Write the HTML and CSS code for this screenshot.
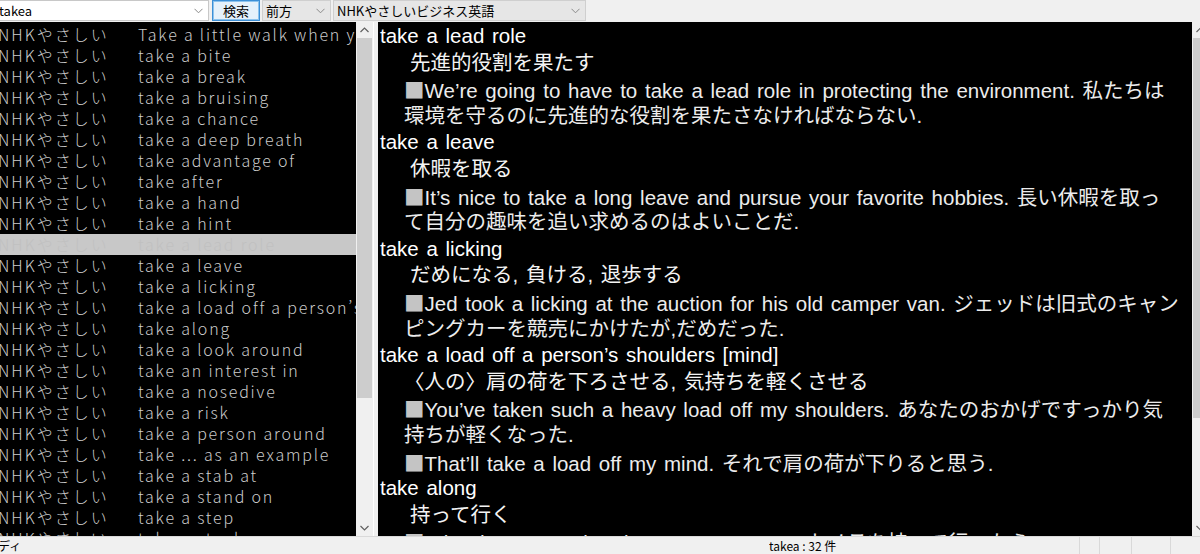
FILE: index.html
```html
<!DOCTYPE html>
<html lang="ja">
<head>
<meta charset="utf-8">
<title>辞書検索</title>
<link rel="stylesheet" href="styles.css">
</head>
<body>
<div class="app">
  <div class="toolbar">
    <div class="combo combo-search">
      <span class="combo-text">takea</span>
      <svg class="chev" width="9" height="6" viewBox="0 0 9 6"><polyline points="0.5,0.8 4.5,4.8 8.5,0.8" fill="none" stroke="#8a8a8a" stroke-width="1"/></svg>
    </div>
    <button class="btn">検索</button>
    <div class="combo combo-mode">
      <span class="combo-text">前方</span>
      <svg class="chev" width="9" height="6" viewBox="0 0 9 6"><polyline points="0.5,0.8 4.5,4.8 8.5,0.8" fill="none" stroke="#8a8a8a" stroke-width="1"/></svg>
    </div>
    <div class="combo combo-dict">
      <span class="combo-text">NHKやさしいビジネス英語</span>
      <svg class="chev" width="9" height="6" viewBox="0 0 9 6"><polyline points="0.5,0.8 4.5,4.8 8.5,0.8" fill="none" stroke="#8a8a8a" stroke-width="1"/></svg>
    </div>
  </div>

  <div class="main">
    <div class="list">
      <div class="row"><span class="src">NHKやさしい</span><span class="word">Take a little walk when you feel tired.</span></div>
      <div class="row"><span class="src">NHKやさしい</span><span class="word">take a bite</span></div>
      <div class="row"><span class="src">NHKやさしい</span><span class="word">take a break</span></div>
      <div class="row"><span class="src">NHKやさしい</span><span class="word">take a bruising</span></div>
      <div class="row"><span class="src">NHKやさしい</span><span class="word">take a chance</span></div>
      <div class="row"><span class="src">NHKやさしい</span><span class="word">take a deep breath</span></div>
      <div class="row"><span class="src">NHKやさしい</span><span class="word">take advantage of</span></div>
      <div class="row"><span class="src">NHKやさしい</span><span class="word">take after</span></div>
      <div class="row"><span class="src">NHKやさしい</span><span class="word">take a hand</span></div>
      <div class="row"><span class="src">NHKやさしい</span><span class="word">take a hint</span></div>
      <div class="row selected"><span class="src">NHKやさしい</span><span class="word">take a lead role</span></div>
      <div class="row"><span class="src">NHKやさしい</span><span class="word">take a leave</span></div>
      <div class="row"><span class="src">NHKやさしい</span><span class="word">take a licking</span></div>
      <div class="row"><span class="src">NHKやさしい</span><span class="word">take a load off a person’s shoulders [mind]</span></div>
      <div class="row"><span class="src">NHKやさしい</span><span class="word">take along</span></div>
      <div class="row"><span class="src">NHKやさしい</span><span class="word">take a look around</span></div>
      <div class="row"><span class="src">NHKやさしい</span><span class="word">take an interest in</span></div>
      <div class="row"><span class="src">NHKやさしい</span><span class="word">take a nosedive</span></div>
      <div class="row"><span class="src">NHKやさしい</span><span class="word">take a risk</span></div>
      <div class="row"><span class="src">NHKやさしい</span><span class="word">take a person around</span></div>
      <div class="row"><span class="src">NHKやさしい</span><span class="word">take ... as an example</span></div>
      <div class="row"><span class="src">NHKやさしい</span><span class="word">take a stab at</span></div>
      <div class="row"><span class="src">NHKやさしい</span><span class="word">take a stand on</span></div>
      <div class="row"><span class="src">NHKやさしい</span><span class="word">take a step</span></div>
      <div class="row"><span class="src">NHKやさしい</span><span class="word">take a stock</span></div>
    </div>

    <div class="vscroll vscroll-left">
      <svg class="arrow" width="9" height="6" viewBox="0 0 9 6"><polyline points="0.5,5 4.5,1 8.5,5" fill="none" stroke="#606060" stroke-width="1.2"/></svg>
      <div class="track"><div class="thumb thumb-left"></div></div>
      <svg class="arrow" width="9" height="6" viewBox="0 0 9 6"><polyline points="0.5,1 4.5,5 8.5,1" fill="none" stroke="#606060" stroke-width="1.2"/></svg>
    </div>

    <div class="splitter"></div>

    <div class="detail">
      <div class="line hw">take a lead role</div>
      <div class="line mean">先進的役割を果たす</div>
      <div class="line ex"><span class="sq">■</span>We’re going to have to take a lead role in protecting the environment. 私たちは</div>
      <div class="line ex">環境を守るのに先進的な役割を果たさなければならない.</div>
      <div class="line hw">take a leave</div>
      <div class="line mean">休暇を取る</div>
      <div class="line ex"><span class="sq">■</span>It’s nice to take a long leave and pursue your favorite hobbies. 長い休暇を取っ</div>
      <div class="line ex">て自分の趣味を追い求めるのはよいことだ.</div>
      <div class="line hw">take a licking</div>
      <div class="line mean">だめになる, 負ける, 退歩する</div>
      <div class="line ex"><span class="sq">■</span>Jed took a licking at the auction for his old camper van. ジェッドは旧式のキャン</div>
      <div class="line ex">ピングカーを競売にかけたが,だめだった.</div>
      <div class="line hw">take a load off a person’s shoulders [mind]</div>
      <div class="line mean mean-br">〈人の〉肩の荷を下ろさせる, 気持ちを軽くさせる</div>
      <div class="line ex"><span class="sq">■</span>You’ve taken such a heavy load off my shoulders. あなたのおかげですっかり気</div>
      <div class="line ex">持ちが軽くなった.</div>
      <div class="line ex"><span class="sq">■</span>That’ll take a load off my mind. それで肩の荷が下りると思う.</div>
      <div class="line hw">take along</div>
      <div class="line mean">持って行く</div>
      <div class="line ex"><span class="sq">■</span>Why don’t you take along your camera? カメラを持って行ったら?</div>
    </div>

    <div class="vscroll vscroll-right">
      <svg class="arrow" width="9" height="6" viewBox="0 0 9 6"><polyline points="0.5,5 4.5,1 8.5,5" fill="none" stroke="#606060" stroke-width="1.2"/></svg>
      <div class="track"><div class="thumb thumb-right"></div></div>
      <svg class="arrow" width="9" height="6" viewBox="0 0 9 6"><polyline points="0.5,1 4.5,5 8.5,1" fill="none" stroke="#606060" stroke-width="1.2"/></svg>
    </div>
  </div>

  <div class="status">
    <div class="status-cell status-left">ディ</div>
    <div class="status-cell status-count">takea : 32 件</div>
    <div class="status-cell status-p1"></div>
    <div class="status-cell status-p2"></div>
    <div class="status-cell status-p3"></div>
    <div class="status-cell status-p4"></div>
  </div>
</div>
</body>
</html>
```

FILE: styles.css
```css
html, body {
  margin: 0;
  padding: 0;
  width: 1200px;
  height: 554px;
  overflow: hidden;
  background: #f0f0f0;
}

.app {
  width: 1200px;
  height: 554px;
  display: flex;
  flex-direction: column;
  font-family: "Noto Sans CJK JP", "Liberation Sans", sans-serif;
}

/* ---------- toolbar ---------- */
.toolbar {
  height: 22px;
  flex: none;
  display: flex;
  align-items: stretch;
  background: #f0f0f0;
  box-sizing: border-box;
  padding-bottom: 1px;
}

.combo {
  display: flex;
  align-items: center;
  box-sizing: border-box;
  border: 1px solid #c8c8c8;
  font-size: 13px;
  color: #000;
  overflow: hidden;
  white-space: nowrap;
}

.combo .combo-text {
  flex: 1;
  overflow: hidden;
  line-height: 18px;
}

.combo .chev {
  flex: none;
  margin-right: 5px;
}

.combo-search {
  width: 209px;
  background: #fff;
  border-left: none;
}
.combo-search .combo-text { margin-left: -1px; }

.btn {
  width: 48px;
  margin-left: 3px;
  padding: 0;
  box-sizing: border-box;
  border: 1px solid #3c8fd6;
  box-shadow: inset 0 0 0 1px #8cc3ee;
  background: #e5f1fb;
  font-family: "Noto Sans CJK JP", sans-serif;
  font-size: 13px;
  line-height: 18px;
  color: #000;
}

.combo-mode {
  width: 69px;
  margin-left: 2px;
  background: #e6e6e6;
  border-color: #cfcfcf;
}
.combo-mode .combo-text { padding-left: 3px; }

.combo-dict {
  width: 253px;
  margin-left: 2px;
  background: #e6e6e6;
  border-color: #cfcfcf;
}
.combo-dict .combo-text { padding-left: 3px; }

/* ---------- main area ---------- */
.main {
  flex: 1;
  display: flex;
  min-height: 0;
}

.list {
  width: 356px;
  flex: none;
  background: #000;
  padding-top: 2px;
  box-sizing: border-box;
  overflow: hidden;
  font-family: "Noto Sans CJK JP Light", "Noto Sans CJK JP", sans-serif;
  font-weight: 300;
  font-size: 16px;
  color: #cccccc;
}

.row {
  height: 21px;
  line-height: 21px;
  display: flex;
  white-space: nowrap;
  overflow: hidden;
}

.row .src {
  flex: none;
  width: 140px;
  margin-left: -2px;
  letter-spacing: 2px;
}

.row .word {
  flex: none;
  letter-spacing: 1.8px;
}

.row.selected {
  background: #c8c8c8;
  color: #c0c0c0;
}

.vscroll {
  flex: none;
  display: flex;
  flex-direction: column;
  align-items: center;
  background: #f0f0f0;
  box-sizing: border-box;
}

.vscroll .arrow {
  flex: none;
  margin: 5px 0;
}

.vscroll .track {
  flex: 1;
  width: 100%;
  position: relative;
}

.thumb {
  position: absolute;
  left: 1px;
  right: 1px;
  background: #cdcdcd;
}

.vscroll-left {
  width: 17px;
}
.thumb-left {
  top: 0;
  height: 360px;
}

.splitter {
  width: 5px;
  flex: none;
  background: #f0f0f0;
  border-left: 1px solid #ffffff;
  box-sizing: border-box;
}

.detail {
  width: 814px;
  flex: none;
  background: #000;
  overflow: hidden;
  box-sizing: border-box;
  padding-top: 1px;
  font-family: "Liberation Sans", "Noto Sans CJK JP", sans-serif;
  font-size: 20.5px;
  word-spacing: 2px;
  color: #ececec;
}

.line {
  height: 26.6px;
  line-height: 26.6px;
  white-space: nowrap;
}

.hw {
  padding-left: 2px;
  color: #ffffff;
}

.mean {
  padding-left: 32px;
  color: #f4f4f4;
}
.mean-br {
  padding-left: 26px;
}

.ex {
  padding-left: 26px;
}

.sq {
  font-family: "Noto Sans CJK JP", sans-serif;
  color: #c4c4c4;
}

.vscroll-right {
  width: 8px;
  align-items: flex-end;
  overflow: hidden;
}
.vscroll-right .arrow {
  margin-right: -5px;
}
.thumb-right {
  top: 0;
  height: 380px;
  left: 1px;
  right: 0;
}

/* ---------- status bar ---------- */
.status {
  height: 18px;
  flex: none;
  display: flex;
  border-top: 1px solid #d9d9d9;
  box-sizing: border-box;
  background: #f0f0f0;
  font-size: 12px;
  line-height: 17px;
  color: #000;
  white-space: nowrap;
}

.status-cell {
  box-sizing: border-box;
  overflow: hidden;
}

.status-left {
  width: 771px;
  margin-left: -2px;
}

.status-count {
  width: 311px;
  border-right: 1px solid #d9d9d9;
}

.status-p1 {
  width: 20px;
  border-right: 1px solid #d9d9d9;
}

.status-p2 {
  width: 32px;
  border-right: 1px solid #d9d9d9;
}

.status-p3 {
  width: 39px;
  border-right: 1px solid #d9d9d9;
}

.status-p4 {
  flex: 1;
}
```
